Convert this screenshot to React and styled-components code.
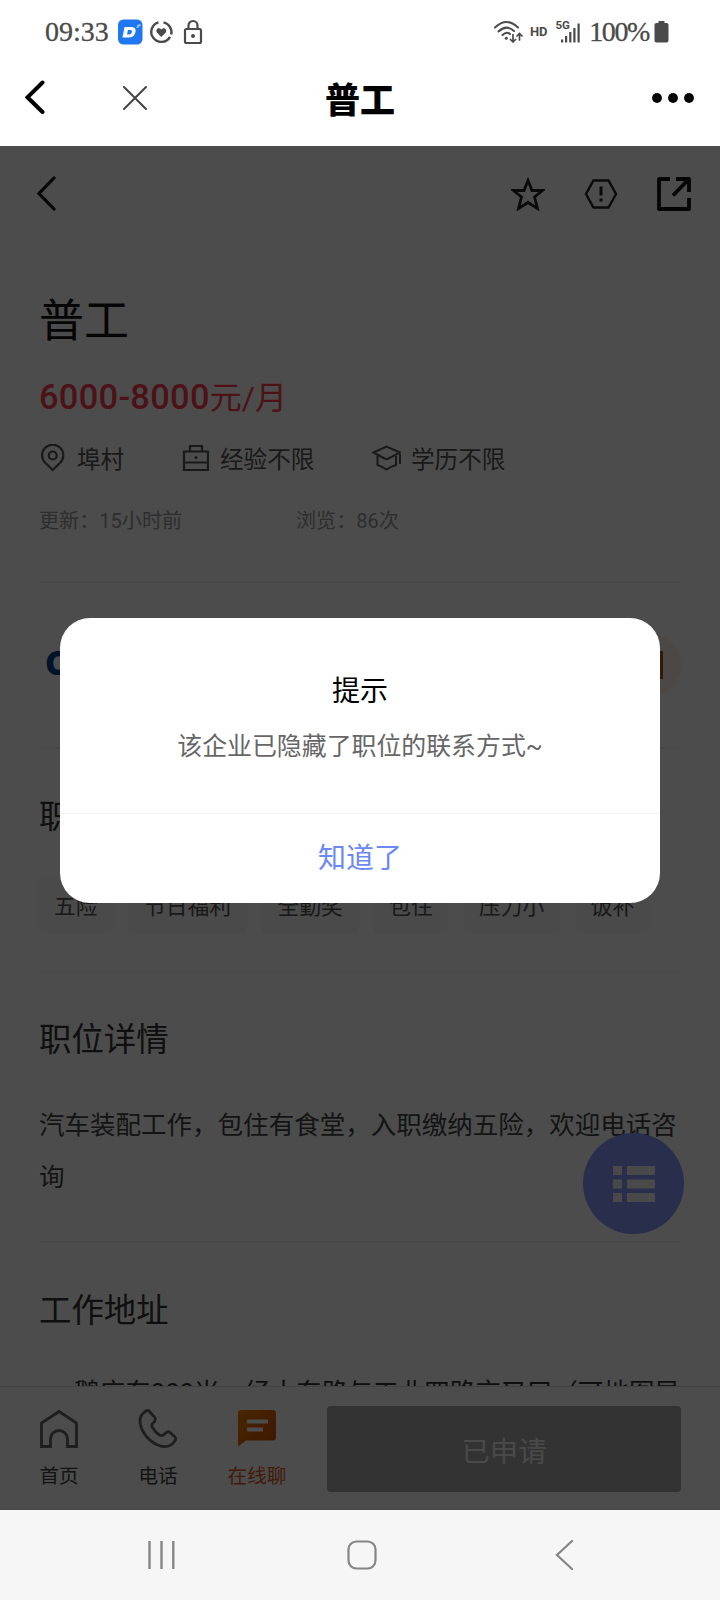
import React from 'react';
import styled, { createGlobalStyle } from 'styled-components';

const GlobalStyle = createGlobalStyle`
  * { box-sizing: border-box; }
  body {
    margin: 0;
    background: #fff;
    font-family: Roboto, 'Noto Sans CJK SC', sans-serif;
  }
  svg { display: block; flex: none; }
`;

const Screen = styled.div`
  width: 720px;
  height: 1600px;
  display: flex;
  flex-direction: column;
  overflow: hidden;
  background: #fff;
`;

/* system status bar */
const StatusBar = styled.div`
  height: 50px;
  padding: 14px 51px 0 45px;
  display: flex;
  align-items: center;
  justify-content: space-between;
  color: #4a4a4a;
`;
const StatusGroup = styled.div`
  display: flex;
  align-items: center;
  height: 36px;
`;
const StatusText = styled.span`
  font: 28px/36px 'Liberation Serif', serif;
  letter-spacing: ${(p) => p.$spacing || 0}px;
  -webkit-text-stroke: 0.3px #4a4a4a;
  margin-left: ${(p) => p.$left || 0}px;
  margin-right: ${(p) => p.$gap || 0}px;
`;
const Hd = styled.span`
  font: 700 13px/20px Roboto, sans-serif;
  letter-spacing: -0.2px;
  margin: 0 8px 0 7px;
`;

/* webview title bar */
const TitleBar = styled.div`
  height: 96px;
  padding: 0 25px;
  display: grid;
  grid-template-columns: 1fr auto 1fr;
  align-items: center;
`;
const TitleLeft = styled.div`
  display: flex;
  align-items: center;
  gap: 77px;
`;
const TitleText = styled.div`
  font: 900 35px/48px 'Noto Sans CJK SC', sans-serif;
  color: #000;
`;
const TitleRight = styled.div`
  display: flex;
  justify-content: flex-end;
`;

/* job page */
const Page = styled.div`
  position: relative;
  height: 1364px;
  display: flex;
  flex-direction: column;
  background: #fff;
`;
const PageNav = styled.div`
  height: 97px;
  padding: 0 29px 2px 37px;
  display: flex;
  align-items: center;
  justify-content: space-between;
`;
const NavIcons = styled.div`
  display: flex;
  align-items: center;
  gap: 39px;
`;
const Content = styled.div`
  height: 1143px;
  padding: 0 39px;
  overflow: hidden;
`;
const JobTitle = styled.h1`
  margin: 47px 0 0;
  font-size: 45px;
  line-height: 64px;
  font-weight: 400;
  color: #111;
`;
const Salary = styled.div`
  margin-top: 19px;
  height: 48px;
  font-size: 34.4px;
  line-height: 48px;
  font-weight: 500;
  letter-spacing: 0.3px;
  color: #ff3e50;
`;
const SalaryUnit = styled.span`
  font-size: 32px;
  font-weight: 400;
  letter-spacing: 0;
`;
const InfoRow = styled.div`
  margin-top: 21px;
  height: 36px;
  display: flex;
  align-items: center;
  font-size: 23.6px;
  line-height: 36px;
  color: #555;
`;
const Info = styled.div`
  display: flex;
  align-items: center;
  gap: ${(p) => p.$gap}px;
  width: ${(p) => p.$width}px;

  svg { margin-bottom: 4px; }
`;
const MetaRow = styled.div`
  margin-top: 28px;
  height: 30px;
  display: flex;
  font-size: 20.1px;
  line-height: 30px;
  color: #999;
`;
const Meta = styled.span`
  width: 257px;
`;
const Section = styled.section`
  height: ${(p) => p.$height}px;
  margin-top: ${(p) => p.$top || 0}px;
  border-top: 2px solid #f1f1f1;
`;
const Company = styled.div`
  height: 100%;
  display: flex;
  align-items: center;
  justify-content: space-between;
`;
const CompanyLogo = styled.span`
  font: 800 33px/40px 'Open Sans', 'Noto Sans', sans-serif;
  color: #00408c;
  padding: 0 0 4px 6px;
`;
const CompanyBadge = styled.span`
  width: 64px;
  height: 64px;
  border-radius: 50%;
  background: #fff0ec;
  display: flex;
  align-items: center;
  justify-content: center;
`;
const BadgeMark = styled.span`
  width: 27px;
  height: 28px;
  border: 3px solid #b4501c;
`;
const Heading = styled.h2`
  margin: ${(p) => p.$top}px 0 0;
  font-size: 32.4px;
  line-height: 48px;
  font-weight: 400;
  color: #333;
`;
const Tags = styled.div`
  display: flex;
  gap: 16.3px;
  margin-top: 37px;
`;
const Tag = styled.span`
  height: 55px;
  padding: 0 15px;
  background: #f7f7f7;
  border-radius: 4px;
  font-size: 21.8px;
  line-height: 58px;
  color: #555;
  white-space: nowrap;
`;
const Paragraph = styled.p`
  margin: 35px 0 0;
  font-size: 25.52px;
  line-height: 52px;
  color: #444;
  width: 642px;
`;
const Address = styled.p`
  margin: 38px 0 0 35px;
  font-size: 25.6px;
  line-height: 40px;
  color: #333;
  white-space: nowrap;
`;
const Fab = styled.div`
  position: absolute;
  left: 583px;
  top: 987px;
  width: 101px;
  height: 101px;
  border-radius: 50%;
  background: #889aff;
  display: flex;
  align-items: center;
  justify-content: center;
`;

const ActionBar = styled.div`
  height: 124px;
  padding: 0 39px;
  border-top: 1px solid #ddd;
  display: flex;
`;
const Action = styled.div`
  width: ${(p) => p.$width}px;
  margin-right: ${(p) => p.$gap}px;
  padding-top: 22px;
  display: flex;
  flex-direction: column;
  align-items: center;
  font-size: 19.6px;
  line-height: 30px;
  white-space: nowrap;
  color: ${(p) => p.$color || '#444'};
`;
const ActionLabel = styled.span`
  margin-top: 13px;
`;
const Applied = styled.button`
  margin: 19px 0 0;
  flex: 1;
  height: 86px;
  border: 0;
  padding: 2px 0 0;
  border-radius: 4px;
  background: #aaa;
  color: #f4f4f4;
  font: 400 28.4px/40px 'Noto Sans CJK SC', sans-serif;
`;

/* modal */
const Mask = styled.div`
  position: absolute;
  inset: 0;
  padding-top: 472px;
  display: flex;
  align-items: flex-start;
  justify-content: center;
  background: rgba(0, 0, 0, 0.7);
`;
const Dialog = styled.div`
  width: 600px;
  height: 285px;
  border-radius: 30px;
  background: #fff;
  overflow: hidden;
  text-align: center;
`;
const DialogTitle = styled.div`
  margin-top: 54px;
  font-size: 28px;
  line-height: 40px;
  color: #000;
`;
const DialogText = styled.div`
  margin-top: 17px;
  height: 84px;
  font-size: 24.9px;
  line-height: 36px;
  color: #666;
`;
const DialogButton = styled.div`
  height: 90px;
  border-top: 1px solid #f3f3f3;
  font-size: 28px;
  line-height: 90px;
  color: #6c88f4;
`;

const SystemNav = styled.div`
  height: 90px;
  padding: 0 146px;
  display: flex;
  align-items: center;
  background: #f6f6f6;
`;
const NavKey = styled.div`
  flex: ${(p) => p.$grow || '0 0 auto'};
  padding-right: ${(p) => p.$right || 0}px;
  display: flex;
  justify-content: center;
`;

const TAGS = ['五险', '节日福利', '全勤奖', '包住', '压力小', '饭补'];

function StatusIcons() {
  return (
    <svg width="86" height="28" viewBox="0 0 86 28" fill="none" stroke="#4a4a4a" strokeWidth="2.2">
      <rect x="1" y="1.500" width="24.500" height="25" rx="5.500" fill="#1f78f0" stroke="none" />
      <path d="M7.500 9H14Q19.500 9 18.500 14Q17.500 19.500 11.500 19.500H5.500ZM11 12L10 16.500H12Q14.500 16.500 15 14Q15.300 12 13.500 12Z" fill="#fff" fillRule="evenodd" stroke="none" />
      <path d="M20.500 10Q20.500 7 23.500 7" stroke="#8fc0ff" strokeWidth="2" />
      <path d="M41.500 4.300A10 10 0 1 0 53 18.800M46.500 4.400A10 10 0 0 1 54.200 16.500" strokeWidth="2.400" />
      <path d="M44.300 19L39.900 14.500C38 11.500 41.800 8.500 44.300 11.500C46.800 8.500 50.600 11.500 48.700 14.500Z" fill="#4a4a4a" stroke="none" />
      <rect x="68" y="11" width="16" height="14" rx="1.500" />
      <path d="M71.500 11V7.500A4.500 4.500 0 0 1 80.500 7.500V11" />
      <circle cx="76" cy="18" r="2" fill="#4a4a4a" stroke="none" />
    </svg>
  );
}

function WifiIcon() {
  return (
    <svg width="29" height="24" viewBox="0 0 29 24" fill="none" stroke="#4a4a4a" strokeWidth="2" strokeLinecap="round">
      <path d="M1 7.500Q12.500-3.500 24 7.500M4.500 11.500Q12.500 4 20 11M8.500 15Q12.500 11 16 14" />
      <circle cx="12.300" cy="18.300" r="1.500" fill="#4a4a4a" stroke="none" />
      <path d="M19 14.500V22M16.500 19.500L19 22L21.500 19.500M25.500 20V13.500M23 16L25.500 13.500L28 16" strokeWidth="1.700" />
    </svg>
  );
}

function SignalIcon() {
  return (
    <svg width="26" height="30" viewBox="0 -3 26 30" fill="#4a4a4a">
      <text x="0.500" y="9" fontSize="11.500" fontWeight="700" fontFamily="Roboto, sans-serif">5G</text>
      <rect x="6" y="19.500" width="2.200" height="3" />
      <rect x="10" y="16" width="2.200" height="6.500" />
      <rect x="14.200" y="12" width="2.200" height="10.500" />
      <rect x="18.300" y="8" width="2.200" height="14.500" />
      <rect x="22.500" y="3.500" width="2.200" height="19" />
    </svg>
  );
}

function Chevron({ width, height, color, stroke }) {
  return (
    <svg width={width} height={height} viewBox={`0 0 ${width} ${height}`} fill="none" stroke={color} strokeWidth={stroke} strokeLinecap="round">
      <path d={`M${width - 2} 2L2 ${height / 2}L${width - 2} ${height - 2}`} />
    </svg>
  );
}

function Header() {
  return (
    <>
      <StatusBar>
        <StatusGroup>
          <StatusText $gap={8}>09:33</StatusText>
          <StatusIcons />
        </StatusGroup>
        <StatusGroup>
          <WifiIcon />
          <Hd>HD</Hd>
          <SignalIcon />
          <StatusText $spacing={-1.4} $left={8} $gap={5}>100%</StatusText>
          <svg width="15" height="22" viewBox="0 0 15 22" fill="#4a4a4a">
            <path d="M4.500 0H10.500V2H12.500Q14.500 2 14.500 4V19.500Q14.500 21.500 12.500 21.500H2.500Q.5 21.500 .5 19.500V4Q.5 2 2.500 2H4.500Z" />
          </svg>
        </StatusGroup>
      </StatusBar>
      <TitleBar>
        <TitleLeft>
          <svg width="21" height="36" viewBox="0 0 21 36" fill="none" stroke="#000" strokeWidth="4" strokeLinecap="round">
            <path d="M17.500 2.500L2.500 17.300L17.500 32" />
          </svg>
          <svg width="24" height="24" viewBox="0 0 24 24" stroke="#444" strokeWidth="2" strokeLinecap="round">
            <path d="M1 1L23 23M23 1L1 23" />
          </svg>
        </TitleLeft>
        <TitleText>普工</TitleText>
        <TitleRight>
          <svg width="44" height="12" viewBox="0 0 44 12">
            <circle cx="6" cy="6" r="4.900" />
            <circle cx="22" cy="6" r="4.900" />
            <circle cx="38" cy="6" r="4.900" />
          </svg>
        </TitleRight>
      </TitleBar>
    </>
  );
}

function JobDetail() {
  return (
    <>
      <PageNav>
        <Chevron width={19} height={35} color="#111" stroke={3.2} />
        <NavIcons>
          <svg width="34" height="34" viewBox="0 0 34 34" fill="none" stroke="#222" strokeWidth="2.800">
            <path d="M17 3.500L21 13.500H31.500L23.500 20L26.500 31.500L17 25.500L7.500 31.500L10.500 20L2.500 13.500H13Z" />
          </svg>
          <svg width="34" height="34" viewBox="0 0 34 34" fill="none" stroke="#222" strokeWidth="2.400">
            <path d="M9.500 3.500H24.500L32 17L24.500 30.500H9.500L2 17Z" />
            <path d="M17 9.500V18.500M17 21.500V24.500" strokeWidth="3" />
          </svg>
          <svg width="34" height="34" viewBox="0 0 34 34" fill="none" stroke="#111" strokeWidth="3.800">
            <path d="M13 2H2V32H32V21M19 2H32V15M31 3L16 18.500" strokeLinejoin="round" />
          </svg>
        </NavIcons>
      </PageNav>
      <Content>
        <JobTitle>普工</JobTitle>
        <Salary>
          6000-8000<SalaryUnit>元/月</SalaryUnit>
        </Salary>
        <InfoRow>
          <Info $width={142} $gap={12}>
            <svg width="26" height="28" viewBox="0 0 26 28" fill="none" stroke="#555" strokeWidth="2.200">
              <path d="M13.700 26L6.200 18.800A10.600 10.600 0 1 1 21.200 18.800Z" />
              <circle cx="13.700" cy="11.500" r="4" />
            </svg>
            埠村
          </Info>
          <Info $width={190} $gap={11}>
            <svg width="28" height="28" viewBox="0 0 28 28" fill="none" stroke="#555" strokeWidth="2.200">
              <path d="M3 7.500H27V26H3ZM3 18.500H27M9 7V2H21V7" />
              <circle cx="15" cy="13.500" r="1.500" fill="#555" stroke="none" />
            </svg>
            经验不限
          </Info>
          <Info $gap={10}>
            <svg width="30" height="28" viewBox="0 0 30 28" fill="none" stroke="#555" strokeWidth="2">
              <path d="M2.500 8.500L15.500 2.500L29 8.500L17.500 14.500Q15.500 15.500 13.500 14.500ZM6.500 12V21Q11 22.500 15.500 25.500Q20 22.500 25 21V12M29 10V20" />
            </svg>
            学历不限
          </Info>
        </InfoRow>
        <MetaRow>
          <Meta>更新：15小时前</Meta>
          <span>浏览：86次</span>
        </MetaRow>
        <Section $top={45} $height={166}>
          <Company>
            <CompanyLogo>C</CompanyLogo>
            <CompanyBadge><BadgeMark /></CompanyBadge>
          </Company>
        </Section>
        <Section $height={224}>
          <Heading $top={44}>职位福利</Heading>
          <Tags>
            {TAGS.map((tag) => <Tag key={tag}>{tag}</Tag>)}
          </Tags>
        </Section>
        <Section $height={270}>
          <Heading $top={43}>职位详情</Heading>
          <Paragraph>汽车装配工作，包住有食堂，入职缴纳五险，欢迎电话咨询</Paragraph>
        </Section>
        <Section $height={240}>
          <Heading $top={44}>工作地址</Heading>
          <Address>鹅庄东200米，经十东路与工业四路交叉口（可地图导</Address>
        </Section>
      </Content>
      <Fab>
        <svg width="42" height="38" viewBox="0 0 42 38" fill="#f6f6f6">
          <path d="M0 1H9V10H0ZM14 1H42V10H14ZM0 14.500H9V23.500H0ZM14 14.500H42V23.500H14ZM0 28H9V37H0ZM14 28H42V37H14Z" />
        </svg>
      </Fab>
    </>
  );
}

function BottomActions() {
  return (
    <ActionBar>
      <Action $width={40} $gap={59}>
        <svg width="40" height="40" viewBox="0 0 40 40" fill="none" stroke="#666" strokeWidth="2.800">
          <path d="M2.500 37.500V14L20 2.500L37.500 14V37.500H28.500V30A8.500 8.500 0 0 0 11.500 30V37.500Z" />
        </svg>
        <ActionLabel>首页</ActionLabel>
      </Action>
      <Action $width={40} $gap={49}>
        <svg width="40" height="40" viewBox="0 0 40 40" fill="none" stroke="#666" strokeWidth="2.800" strokeLinejoin="round">
          <path d="M10.500 1.500L16.500 8Q18.500 11 15 14Q13 16 14.500 18.500Q17 23 21.500 26Q24 27.500 26.500 25Q29.500 21.500 32 23.500L37 28Q38.500 30 36.500 32.500C32 38.500 25 38.500 18.500 35.500C8 30 2 20 2 11.500Q2 7 6 3.500Q8.500 1 10.500 1.500Z" />
        </svg>
        <ActionLabel>电话</ActionLabel>
      </Action>
      <Action $width={60} $gap={40} $color="#dc5a1e">
        <svg width="40" height="40" viewBox="0 0 40 40">
          <defs>
            <linearGradient id="chat" x1="0" y1="0" x2="1" y2="1">
              <stop offset="0" stopColor="#f08200" />
              <stop offset="1" stopColor="#d24b0a" />
            </linearGradient>
          </defs>
          <path d="M4 1H36Q39 1 39 4V28.500Q39 31.500 36 31.500H9L1 37.500V4Q1 1 4 1Z" fill="url(#chat)" />
          <path d="M10 10.500H31V14.500H10ZM10 18.500H26V22.500H10Z" fill="#fff" />
        </svg>
        <ActionLabel>在线聊</ActionLabel>
      </Action>
      <Applied>已申请</Applied>
    </ActionBar>
  );
}

function App() {
  return (
    <Screen>
      <GlobalStyle />
      <Header />
      <Page>
        <JobDetail />
        <BottomActions />
        <Mask>
          <Dialog>
            <DialogTitle>提示</DialogTitle>
            <DialogText>该企业已隐藏了职位的联系方式~</DialogText>
            <DialogButton>知道了</DialogButton>
          </Dialog>
        </Mask>
      </Page>
      <SystemNav>
        <NavKey>
          <svg width="30" height="30" viewBox="0 0 30 30" stroke="#858585" strokeWidth="2.400">
            <path d="M3.500 1V29M15.500 1V29M27.300 1V29" />
          </svg>
        </NavKey>
        <NavKey $grow="1" $right={8}>
          <svg width="30" height="30" viewBox="0 0 30 30" fill="none" stroke="#858585" strokeWidth="2.200">
            <rect x="1.500" y="1.500" width="27" height="27" rx="8" />
          </svg>
        </NavKey>
        <NavKey>
          <Chevron width={19} height={32} color="#858585" stroke={2.2} />
        </NavKey>
      </SystemNav>
    </Screen>
  );
}

export default App;
